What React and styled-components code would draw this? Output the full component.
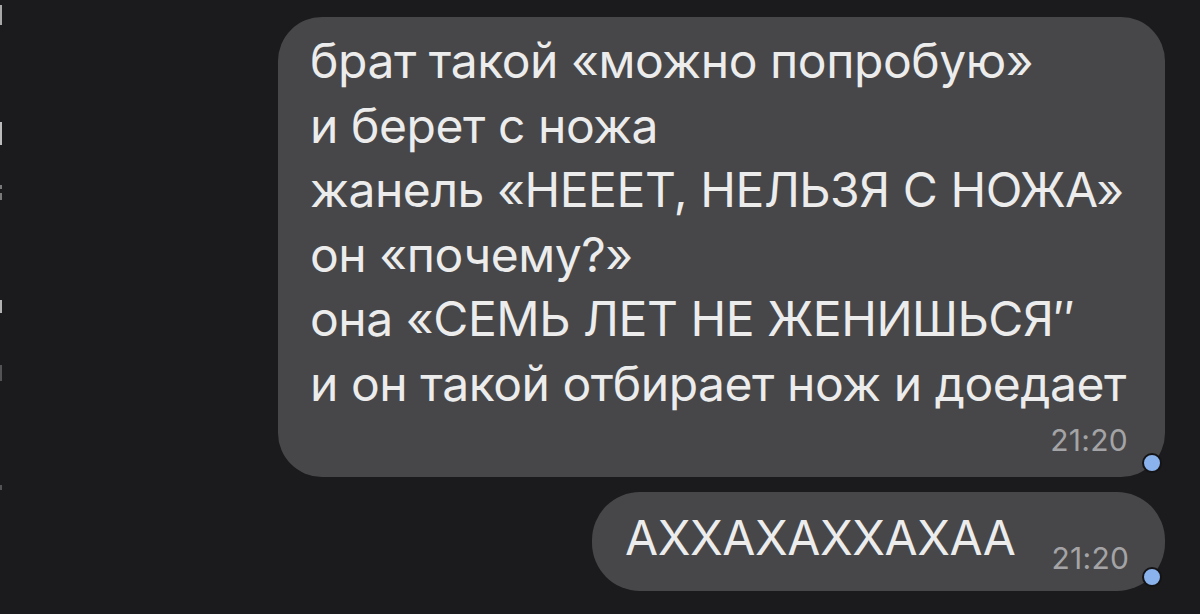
import React from "react";
import styled, { createGlobalStyle } from "styled-components";

const GlobalStyle = createGlobalStyle`
    html, body {
        margin: 0;
        padding: 0;
        background: #1b1b1d;
    }
    body {
        font-family: Inter, "Noto Sans", "DejaVu Sans", sans-serif;
        -webkit-font-smoothing: antialiased;
    }
`;

const messages = [
    {
        id: 1,
        lines: [
            "брат такой «можно попробую»",
            "и берет с ножа",
            "жанель «НЕЕЕТ, НЕЛЬЗЯ С НОЖА»",
            "он «почему?»",
            "она «СЕМЬ ЛЕТ НЕ ЖЕНИШЬСЯ\u2033",
            "и он такой отбирает нож и доедает",
        ],
        time: "21:20",
        width: 887,
    },
    { id: 2, lines: ["АХХАХАХХАХАА"], time: "21:20", width: 573, inline: true },
];

const edgeMarks = [
    { top: 5, height: 20, opacity: 0.75 },
    { top: 122, height: 23, opacity: 0.85 },
    { top: 185, height: 4, opacity: 0.5 },
    { top: 193, height: 7, opacity: 0.5 },
    { top: 300, height: 13, opacity: 0.8 },
    { top: 365, height: 16, opacity: 0.3 },
    { top: 485, height: 5, opacity: 0.3 },
];

const App = () => {
    return (
        <>
            <GlobalStyle />
            <Screen>
                {edgeMarks.map((m, i) => (
                    <EdgeMark key={i} style={{ top: m.top, height: m.height, opacity: m.opacity }} />
                ))}
                <Thread>
                    {messages.map((msg) => (
                        <Bubble key={msg.id} $width={msg.width} $inline={msg.inline}>
                            <Body>
                                {msg.lines.map((line, i) => (
                                    <Line key={i}>{line}</Line>
                                ))}
                            </Body>
                            <Time $inline={msg.inline}>{msg.time}</Time>
                            <ReadDot />
                        </Bubble>
                    ))}
                </Thread>
            </Screen>
        </>
    );
};

const Screen = styled.div`
    position: relative;
    width: 1200px;
    height: 614px;
    overflow: hidden;
    background: #1b1b1d;
`;

const EdgeMark = styled.span`
    position: absolute;
    left: 0;
    width: 2px;
    background: #d8d8d8;
`;

const Thread = styled.div`
    display: flex;
    flex-direction: column;
    align-items: flex-end;
    gap: 15px;
    padding: 17px 35px 0 0;
`;

const Bubble = styled.div`
    position: relative;
    box-sizing: border-box;
    width: ${(p) => p.$width}px;
    display: flex;
    flex-direction: ${(p) => (p.$inline ? "row" : "column")};
    align-items: ${(p) => (p.$inline ? "flex-end" : "stretch")};
    gap: ${(p) => (p.$inline ? "36px" : "0")};
    padding: ${(p) => (p.$inline ? "14px 37px 21px 33px" : "12px 37px 20px 32px")};
    background: #474749;
    border-radius: ${(p) => (p.$inline ? "48px" : "44px")};
    color: #ececec;
`;

const Body = styled.div`
    display: flex;
    flex-direction: column;
`;

const Line = styled.div`
    font-size: 48px;
    line-height: 64.6px;
    white-space: nowrap;
    letter-spacing: -0.45px;
`;

const Time = styled.span`
    align-self: flex-end;
    font-size: 30px;
    line-height: ${(p) => (p.$inline ? "30px" : "34px")};
    margin: ${(p) => (p.$inline ? "0 0 -3px 0" : "6px 0 0 0")};
    color: #a4a4a6;
    letter-spacing: 0.3px;
`;

const ReadDot = styled.span`
    position: absolute;
    right: 3px;
    bottom: 4px;
    width: 16px;
    height: 16px;
    border-radius: 50%;
    background: #8ab2ec;
    border: 2px solid #141416;
`;

export default App;
